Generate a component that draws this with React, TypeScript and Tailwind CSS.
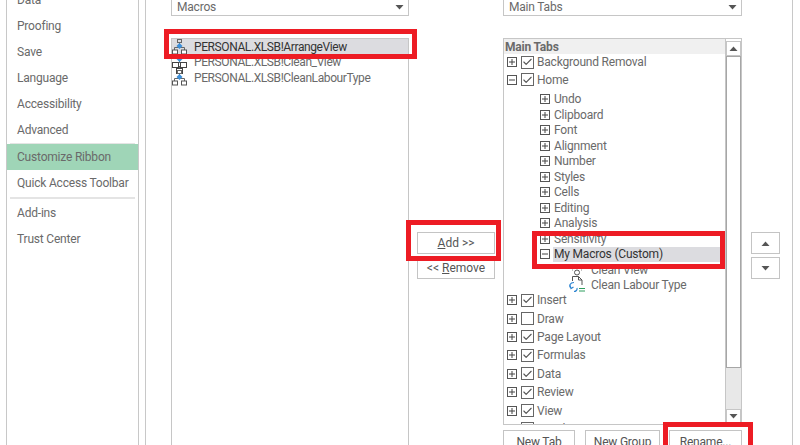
import { Check } from 'lucide-react'

const NAV_TOP = ['Data', 'Proofing', 'Save', 'Language', 'Accessibility', 'Advanced']

type TreeRow = {
  label: string
  kind: 'top' | 'sub' | 'macro'
  checked?: boolean
  open?: boolean
  rowClass: string
  selected?: boolean
  icon?: 'view' | 'labour'
}

const TREE: TreeRow[] = [
  { label: 'Background Removal', kind: 'top', checked: true, rowClass: 'h-[16px]' },
  { label: 'Home', kind: 'top', checked: true, open: true, rowClass: 'h-[19px] mb-[2.5px]' },
  { label: 'Undo', kind: 'sub', rowClass: 'h-[15.5px]' },
  { label: 'Clipboard', kind: 'sub', rowClass: 'h-[15.5px]' },
  { label: 'Font', kind: 'sub', rowClass: 'h-[15.5px]' },
  { label: 'Alignment', kind: 'sub', rowClass: 'h-[15.5px]' },
  { label: 'Number', kind: 'sub', rowClass: 'h-[15.5px]' },
  { label: 'Styles', kind: 'sub', rowClass: 'h-[15.5px]' },
  { label: 'Cells', kind: 'sub', rowClass: 'h-[15.5px]' },
  { label: 'Editing', kind: 'sub', rowClass: 'h-[15.5px]' },
  { label: 'Analysis', kind: 'sub', rowClass: 'h-[15.5px]' },
  { label: 'Sensitivity', kind: 'sub', rowClass: 'h-[15.5px]' },
  { label: 'My Macros (Custom)', kind: 'sub', open: true, selected: true, rowClass: 'h-[15.5px]' },
  { label: 'Clean View', kind: 'macro', icon: 'view', rowClass: 'h-[15.5px]' },
  { label: 'Clean Labour Type', kind: 'macro', icon: 'labour', rowClass: 'h-[13.5px] pt-[2px]' },
  { label: 'Insert', kind: 'top', checked: true, rowClass: 'h-[18.4px]' },
  { label: 'Draw', kind: 'top', checked: false, rowClass: 'h-[18.4px]' },
  { label: 'Page Layout', kind: 'top', checked: true, rowClass: 'h-[18.4px]' },
  { label: 'Formulas', kind: 'top', checked: true, rowClass: 'h-[18.4px]' },
  { label: 'Data', kind: 'top', checked: true, rowClass: 'h-[18.4px]' },
  { label: 'Review', kind: 'top', checked: true, rowClass: 'h-[18.4px]' },
  { label: 'View', kind: 'top', checked: true, rowClass: 'h-[18.4px]' },
  { label: 'Developer', kind: 'top', checked: true, rowClass: 'h-[18.4px]' },
]

function Caret({ up = false, className = '' }: { up?: boolean; className?: string }) {
  return (
    <svg width="9" height="5" viewBox="0 0 9 5" className={className}>
      <path d={up ? 'M0.5 5 L4.5 0.5 L8.5 5 Z' : 'M0.5 0 L4.5 4.5 L8.5 0 Z'} fill="#555" />
    </svg>
  )
}

function Combo({ label }: { label: string }) {
  return (
    <div className="h-[19px] -mt-[3px] shrink-0 flex items-center justify-between border border-[#c6c6c6] pl-[5px] pr-[4px] pt-px text-[#6a6a6a]">
      <span>{label}</span>
      <Caret />
    </div>
  )
}

function Expander({ open }: { open?: boolean }) {
  return (
    <svg width="10" height="10" viewBox="0 0 10 10" className="shrink-0" fill="none">
      <rect x="0.5" y="0.5" width="9" height="9" stroke="#555" />
      <path d={open ? 'M2 5 H8' : 'M2 5 H8 M5 2 V8'} stroke="#444" />
    </svg>
  )
}

function CheckBox({ checked }: { checked?: boolean }) {
  return (
    <span className="w-[13px] h-[13px] shrink-0 border border-[#666] flex items-center justify-center">
      {checked && <Check size={12} strokeWidth={2.4} color="#555" />}
    </span>
  )
}

function FlowIcon() {
  return (
    <svg width="16" height="16" viewBox="0 0 16 16" className="shrink-0" fill="none">
      <rect x="5.5" y="0.5" width="4" height="3" stroke="#666" />
      <path d="M7.5 4 V7 M2.5 11 V8.5 H12.5 V11" stroke="#666" />
      <path d="M7.5 4 L10.5 7 L7.5 10 L4.5 7 Z" fill="#3b8ed8" />
      <rect x="0.5" y="11" width="5" height="4" fill="#fff" stroke="#555" />
      <rect x="9.5" y="11" width="5" height="4" fill="#fff" stroke="#555" />
    </svg>
  )
}

function BranchIcon() {
  return (
    <svg width="16" height="20" viewBox="0 0 16 20" className="shrink-0 -mb-[4px]" fill="none">
      <path d="M7.5 5 V9 M7.5 12 V15" stroke="#666" />
      <path d="M7.5 2 L10.5 5 L7.5 8 L4.5 5 Z" fill="#3b8ed8" />
      <rect x="0.5" y="8.5" width="6" height="5" fill="#fff" stroke="#444" />
      <rect x="8.5" y="8.5" width="6" height="5" fill="#fff" stroke="#444" />
      <rect x="4.5" y="14.5" width="6" height="5" fill="#fff" stroke="#444" />
    </svg>
  )
}

function ViewIcon() {
  return (
    <svg width="18" height="18" viewBox="0 0 18 18" className="shrink-0" fill="none">
      <circle cx="9" cy="11.5" r="2.5" stroke="#555" />
      <path d="M5 9 H4 M14 9 H13" stroke="#888" />
    </svg>
  )
}

function LabourIcon() {
  return (
    <svg width="18" height="18" viewBox="0 0 18 18" className="shrink-0" fill="none">
      <path d="M4.5 5 V0.5 H10.5 L14 4 V9 M10.5 0.5 V4 H14" stroke="#555" />
      <path d="M6 6.5 C2 6.5 0.5 10 3 12 M2 9.5 L3 12.5 L5.5 11" stroke="#2f86d2" strokeWidth="1.2" />
      <path d="M6 15.5 C8 15.5 9.5 14 9 12" stroke="#2f86d2" strokeWidth="1.2" />
      <path d="M11 12.5 H17 M11 15 H17" stroke="#2e9e5e" />
    </svg>
  )
}

function TreeItem({ row }: { row: TreeRow }) {
  return (
    <div className={`flex items-center shrink-0 ${row.rowClass}`}>
      {row.kind === 'top' && (
        <>
          <span className="ml-[3px] mr-[4px] flex"><Expander open={row.open} /></span>
          <CheckBox checked={row.checked} />
          <span className="ml-[3px] text-[#6a6a6a]">{row.label}</span>
        </>
      )}
      {row.kind === 'sub' && (
        <>
          <span className="ml-[36px] mr-[3px] flex"><Expander open={row.open} /></span>
          <span className={row.selected ? 'flex-1 self-stretch flex items-center bg-[#dcdce0] text-[#333] pl-px' : 'pl-px text-[#6a6a6a]'}>
            {row.label}
          </span>
        </>
      )}
      {row.kind === 'macro' && (
        <>
          <span className="ml-[64px] mr-[5px] flex w-[18px]">{row.icon === 'view' ? <ViewIcon /> : <LabourIcon />}</span>
          <span className="text-[#6a6a6a]">{row.label}</span>
        </>
      )}
    </div>
  )
}

function SideButton({ children, className = '' }: { children: React.ReactNode; className?: string }) {
  return (
    <div className={`border border-[#c4c4c4] flex items-center justify-center text-[#555] shrink-0 ${className}`}>
      {children}
    </div>
  )
}

export default function App() {
  return (
    <div
      className="relative w-[800px] h-[445px] overflow-hidden bg-white flex text-[12px] leading-none tracking-[-0.2px]"
      style={{ fontFamily: 'Roboto, "Open Sans", sans-serif' }}
    >
      {/* left nav */}
      <nav className="ml-[6px] w-[133px] shrink-0 border-x border-[#c8c8c8] text-[#6a6a6a] -mt-[13px] h-[470px] flex flex-col">
        {NAV_TOP.map((item) => (
          <div key={item} className="h-[26px] pl-[10px] flex items-center shrink-0">{item}</div>
        ))}
        <div className="h-px mx-[3px] bg-[#e4e4e4] shrink-0" />
        <div className="h-[26px] pl-[10px] flex items-center shrink-0 bg-[#9fd5b7]">Customize Ribbon</div>
        <div className="h-[26px] pl-[10px] flex items-center shrink-0">Quick Access Toolbar</div>
        <div className="h-[2px] mx-[3px] my-px bg-[#e4e4e4] shrink-0" />
        <div className="h-[26px] pl-[10px] flex items-center shrink-0">Add-ins</div>
        <div className="h-[26px] pl-[10px] flex items-center shrink-0">Trust Center</div>
      </nav>

      {/* main panel */}
      <main className="ml-[6px] w-[648px] shrink-0 border-x border-[#c8c8c8] flex pl-[25px]">
        <section className="w-[238px] shrink-0 flex flex-col">
          <Combo label="Macros" />
          <div className="mt-[22px] flex-1 -mb-[10px] border border-[#c6c6c6] flex flex-col tracking-[-0.4px]">
            <div className="h-[15.5px] flex items-center gap-[6px] bg-[#dcdce0] text-[#333]">
              <FlowIcon />
              <span>PERSONAL.XLSB!ArrangeView</span>
            </div>
            <div className="h-[15.5px] flex items-center gap-[6px] text-[#6a6a6a]">
              <BranchIcon />
              <span>PERSONAL.XLSB!Clean_View</span>
            </div>
            <div className="h-[15.5px] flex items-center gap-[6px] text-[#6a6a6a]">
              <FlowIcon />
              <span>PERSONAL.XLSB!CleanLabourType</span>
            </div>
          </div>
        </section>

        <section className="w-[94px] shrink-0 pl-[8px] pt-[232px] flex flex-col gap-[3px] tracking-normal">
          <SideButton className="w-[78px] h-[22px]"><span><u>A</u>dd &gt;&gt;</span></SideButton>
          <SideButton className="w-[78px] h-[22px]"><span>&lt;&lt; <u>R</u>emove</span></SideButton>
        </section>

        <section className="w-[239px] shrink-0 flex flex-col">
          <Combo label="Main Tabs" />
          <div className="mt-[22px] h-[387px] shrink-0 border border-[#c6c6c6] flex overflow-hidden">
            <div className="flex-1 min-w-0 overflow-hidden flex flex-col">
              <div className="h-[15px] shrink-0 bg-[#f0f0f0] flex items-center pl-px font-bold text-[#6a6a6a]">Main Tabs</div>
              {TREE.map((row) => (
                <TreeItem key={row.label} row={row} />
              ))}
            </div>
            <div className="w-[16px] shrink-0 border-l border-[#c6c6c6] flex flex-col pt-[2px]">
              <SideButton className="h-[15px] w-[15px] border-[#c6c6c6]"><Caret up /></SideButton>
              <div className="h-[312px] shrink-0 border border-[#a6a6a6]" />
              <div className="flex-1 bg-[#e8e8e8]" />
              <SideButton className="h-[15px] w-[15px] border-[#c6c6c6]"><Caret /></SideButton>
            </div>
          </div>
          <div className="mt-[5px] flex">
            <SideButton className="w-[72px] h-[24px]">New Tab</SideButton>
            <SideButton className="ml-[10px] w-[75px] h-[24px]">New Group</SideButton>
            <SideButton className="ml-[9px] w-[73px] h-[24px]">Rename...</SideButton>
          </div>
        </section>

        <section className="pl-[9px] pt-[232px] flex flex-col gap-[3px]">
          <SideButton className="w-[29px] h-[22px]"><Caret up /></SideButton>
          <SideButton className="w-[29px] h-[22px]"><Caret /></SideButton>
        </section>
      </main>

      {/* red annotation boxes */}
      <div className="absolute left-[164px] top-[29px] w-[253px] h-[30px] border-[5px] border-[#ed1c24]" />
      <div className="absolute left-[406px] top-[220px] w-[95px] h-[41px] border-[5px] border-[#ed1c24]" />
      <div className="absolute left-[532px] top-[231px] w-[193px] h-[38px] border-[5px] border-[#ed1c24]" />
      <div className="absolute left-[663px] top-[422px] w-[90px] h-[40px] border-[5px] border-[#ed1c24]" />
    </div>
  )
}
